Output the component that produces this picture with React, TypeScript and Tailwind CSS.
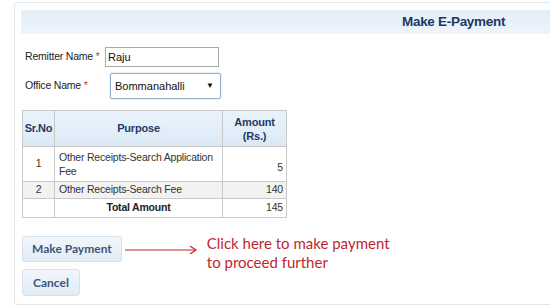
import React from "react";

export default function App() {
  const label = "text-[10.5px] text-[#222] whitespace-nowrap tracking-[-0.2px]";
  const btn = "flex items-center rounded-[3px] border border-[#d5e2ee] bg-gradient-to-b from-[#f1f6fb] to-[#e1ecf6] text-[12px] font-bold text-[#3d5678]";
  const cell = "border border-[#c9c9c9]";
  return (
    <div className="w-[550px] h-[308px] bg-white overflow-hidden" style={{ fontFamily: "'Liberation Sans', Arial, sans-serif" }}>
      <div className="ml-[14px] mt-[2px] w-[560px] h-[303px] border border-[#dfe8ef] rounded-[3px] pl-[6px] pt-[7px] flex flex-col">
        <div className="h-[24px] bg-gradient-to-b from-[#e3eef8] to-[#eef5fb] flex items-center pl-[381px]">
          <span className="text-[13.5px] font-bold text-[#213763] tracking-[-0.3px]">Make E-Payment</span>
        </div>
        <div className="flex flex-col pl-[4px] mt-[13px] gap-[6px]">
          <div className="flex items-center">
            <span className={`${label} w-[80px]`}>Remitter Name <span className="text-[#d33]">*</span></span>
            <div className="w-[114px] h-[20px] border border-[#a9a9a9] flex items-center pl-[2px] text-[11px] text-[#111]">Raju</div>
          </div>
          <div className="flex items-center">
            <span className={`${label} w-[85px]`}>Office Name <span className="text-[#d33]">*</span></span>
            <div className="w-[111px] h-[26px] border border-[#8fb0cf] rounded-[2px] flex items-center justify-between pl-[4px] pr-[6px] text-[11px] text-[#111] shadow-[0_0_2px_#b7cde3]">
              <span>Bommanahalli</span>
              <span className="text-[8px]">▼</span>
            </div>
          </div>
        </div>
        <table className="mt-[11px] ml-[1px] w-[265px] border-collapse text-[10.5px] text-[#333] tracking-[-0.2px]">
          <thead>
            <tr className="bg-gradient-to-b from-[#eaf3fb] to-[#dbe9f5] h-[36px] text-[#1f3a66]">
              <th className={`w-[32px] ${cell} font-bold text-[11px]`}>Sr.No</th>
              <th className={`w-[168px] ${cell} font-bold text-[11px]`}>Purpose</th>
              <th className={`${cell} font-bold text-[11px] leading-[14px]`}>Amount<br />(Rs.)</th>
            </tr>
          </thead>
          <tbody>
            <tr className="h-[35px]">
              <td className={`${cell} text-center`}>1</td>
              <td className={`${cell} px-[4px] leading-[14px]`}>Other Receipts-Search Application Fee</td>
              <td className={`${cell} text-right pr-[3px] pt-[8px]`}>5</td>
            </tr>
            <tr className="h-[17px] bg-[#f2f2f2]">
              <td className={`${cell} text-center`}>2</td>
              <td className={`${cell} px-[4px]`}>Other Receipts-Search Fee</td>
              <td className={`${cell} text-right pr-[3px]`}>140</td>
            </tr>
            <tr className="h-[19px]">
              <td className={cell}></td>
              <td className={`${cell} text-center font-bold text-[#222]`}>Total Amount</td>
              <td className={`${cell} text-right pr-[3px]`}>145</td>
            </tr>
          </tbody>
        </table>
        <div className="flex items-start h-[26px] mt-[18px] ml-[1px]">
          <div className={`${btn} h-[26px] px-[9px]`} style={{ fontFamily: "Lato, sans-serif" }}>Make Payment</div>
          <svg width="74" height="12" viewBox="0 0 74 12" className="ml-[3px] mt-[8px] shrink-0">
            <line x1="0" y1="6" x2="71" y2="6" stroke="#c0272d" strokeWidth="1.2" />
            <path d="M65 2 L71 6 L65 10" fill="none" stroke="#c0272d" strokeWidth="1.2" />
          </svg>
          <div className="ml-[8px] mt-[-2px] text-[15px] leading-[19px] text-[#c0272d] whitespace-nowrap" style={{ fontFamily: "Lato, sans-serif" }}>
            Click here to make payment<br />to proceed further
          </div>
        </div>
        <div className="mt-[7px] ml-[1px] flex">
          <div className={`${btn} h-[27px] px-[10px]`} style={{ fontFamily: "Lato, sans-serif" }}>Cancel</div>
        </div>
      </div>
    </div>
  );
}
